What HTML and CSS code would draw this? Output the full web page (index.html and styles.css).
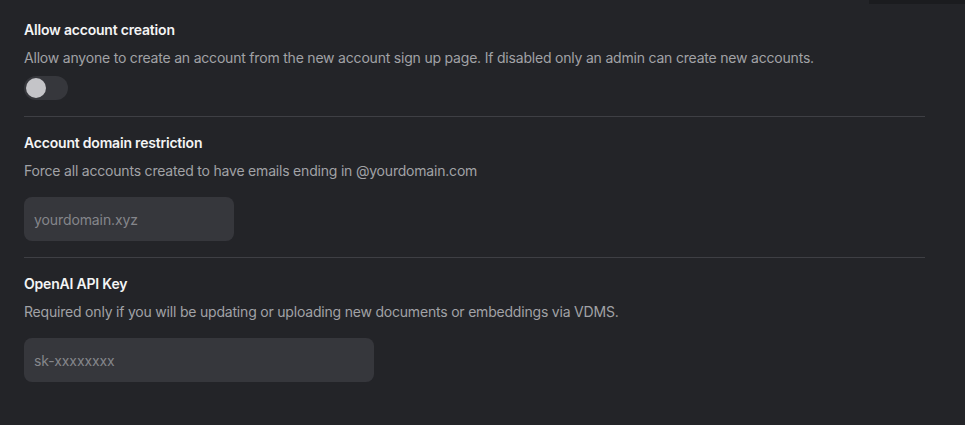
FILE: index.html
```html
<!DOCTYPE html>
<html lang="en">
<head>
<meta charset="utf-8">
<link rel="stylesheet" href="styles.css">
</head>
<body>
<div class="corner"></div>
<main class="settings">
  <section class="setting">
    <h3 class="title">Allow account creation</h3>
    <p class="desc">Allow anyone to create an account from the new account sign up page. If disabled only an admin can create new accounts.</p>
    <label class="toggle"><span class="knob"></span></label>
  </section>
  <section class="setting">
    <h3 class="title">Account domain restriction</h3>
    <p class="desc">Force all accounts created to have emails ending in @yourdomain.com</p>
    <input class="field field-sm" type="text" placeholder="yourdomain.xyz">
  </section>
  <section class="setting last">
    <h3 class="title">OpenAI API Key</h3>
    <p class="desc">Required only if you will be updating or uploading new documents or embeddings via VDMS.</p>
    <input class="field field-md" type="text" placeholder="sk-xxxxxxxx">
  </section>
</main>
</body>
</html>
```
FILE: styles.css
```css
html, body {
  margin: 0;
  padding: 0;
  background: #232428;
  height: 100%;
  overflow: hidden;
}
body {
  font-family: Inter, "Noto Sans", sans-serif;
  position: relative;
}
.corner {
  position: absolute;
  top: 0;
  right: 0;
  width: 96px;
  height: 4px;
  background: #1b1c1f;
}
.settings {
  padding: 4px 40px 0 24px;
  display: flex;
  flex-direction: column;
}
.setting {
  display: flex;
  flex-direction: column;
  align-items: flex-start;
  padding: 16px 0 16px;
  border-bottom: 1px solid #3e3f44;
}
.setting.last {
  border-bottom: none;
}
.title {
  margin: 0;
  font-size: 14px;
  line-height: 20px;
  font-weight: 600;
  letter-spacing: -0.2px;
  color: #f4f4f5;
}
.desc {
  margin: 8px 0 0;
  font-size: 14px;
  line-height: 20px;
  letter-spacing: -0.2px;
  color: #a1a2a6;
}
.toggle {
  margin-top: 8px;
  width: 44px;
  height: 24px;
  border-radius: 12px;
  background: #36373c;
  display: flex;
  align-items: center;
  padding: 0 2px;
  box-sizing: border-box;
}
.knob {
  width: 20px;
  height: 20px;
  border-radius: 50%;
  background: #c4c4c8;
}
.field {
  margin-top: 16px;
  height: 44px;
  box-sizing: border-box;
  border: none;
  outline: none;
  border-radius: 8px;
  background: #36373c;
  padding: 0 10px;
  font-family: Inter, "Noto Sans", sans-serif;
  font-size: 14px;
  letter-spacing: -0.1px;
  color: #e4e4e7;
}
.field::placeholder {
  color: #85868b;
}
.field-sm { width: 210px; }
.field-md { width: 350px; }
```
